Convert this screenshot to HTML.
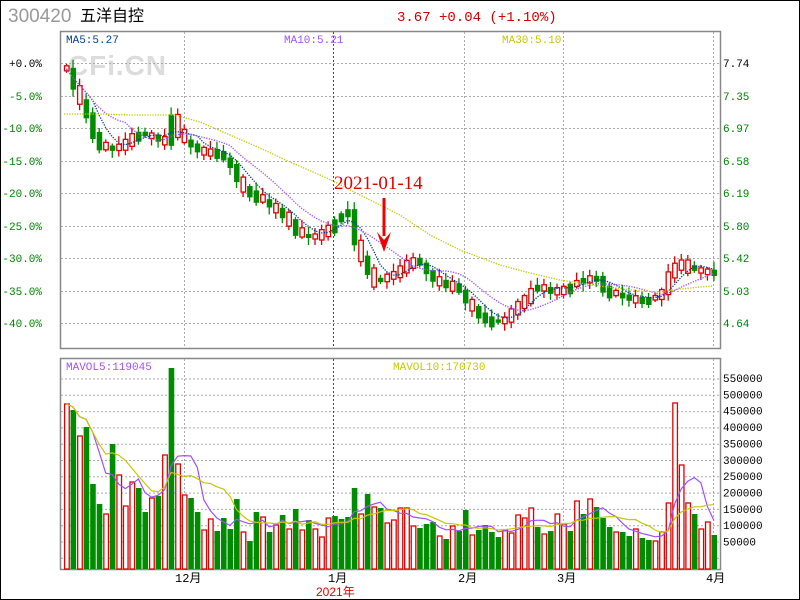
<!DOCTYPE html>
<html><head><meta charset="utf-8"><style>
body{margin:0;background:#fff}
#w{position:relative;width:798px;height:598px;border:1px solid #000;overflow:hidden}
svg{position:absolute;left:-1px;top:-1px}
text{font-family:"Liberation Mono","WenQuanYi Zen Hei",monospace}
</style></head><body><div id="w">
<svg id="s" width="800" height="600" xmlns="http://www.w3.org/2000/svg">
<text x="8" y="22" style="font-family:'Liberation Sans',sans-serif" font-size="19" fill="#999">300420</text>
<text x="80" y="21" style="font-family:'WenQuanYi Zen Hei',sans-serif" font-size="16" fill="#000">五洋自控</text>
<text x="397" y="21" font-size="14" fill="#d00000">3.67 +0.04 (+1.10%)</text>
<rect x="60.5" y="31.5" width="660" height="317" fill="none" stroke="#888" stroke-width="1.5"/>
<rect x="60.5" y="358.5" width="660" height="211" fill="none" stroke="#888" stroke-width="1.5"/>
<text x="68" y="75" style="font-family:'Liberation Sans',sans-serif;font-weight:bold" font-size="28" textLength="98" fill="#dcdcdc">CFi.CN</text>
<g id="grid"></g><g id="vol"></g><g id="cand"></g><g id="lines"></g>
<text x="66" y="43" font-size="11" fill="#004090">MA5:5.27</text>
<text x="284" y="43" font-size="11" fill="#a050ff">MA10:5.21</text>
<text x="502" y="43" font-size="11" fill="#c8c800">MA30:5.10</text>
<text x="66" y="370" font-size="11" fill="#a050ff">MAVOL5:119045</text>
<text x="393" y="370" font-size="11" fill="#c8c800">MAVOL10:170730</text>
<text x="334" y="189" style="font-family:'Liberation Serif',serif" font-size="19" fill="#e00000">2021-01-14</text>
<rect x="382.5" y="198" width="3" height="38" fill="#f00000"/>
<polygon points="377,232 384,252 391,232 384,240" fill="#f00000"/>
<g font-size="12" fill="#000" style="font-family:'WenQuanYi Zen Hei',sans-serif">
<text x="175" y="582">12月</text><text x="328" y="582">1月</text><text x="458" y="582">2月</text><text x="557" y="582">3月</text><text x="706" y="582">4月</text>
</g>
<text x="316" y="596" font-size="12" fill="#e00000" style="font-family:'WenQuanYi Zen Hei',sans-serif">2021年</text>
</svg></div>
<script>
var NS="http://www.w3.org/2000/svg";
function el(p,t,a,tx){var e=document.createElementNS(NS,t);for(var k in a)e.setAttribute(k,a[k]);if(tx!=null)e.textContent=tx;document.getElementById(p).appendChild(e);return e}
var g="grid";
var py=[63,96,128,161,193,226,258,291,323],pl=["+0.0%","-5.0%","-10.0%","-15.0%","-20.0%","-25.0%","-30.0%","-35.0%","-40.0%"],pr=["7.74","7.35","6.97","6.58","6.19","5.80","5.42","5.03","4.64"];
py.forEach(function(y,i){el(g,"line",{x1:61,x2:720,y1:y+.5,y2:y+.5,stroke:"#aaa","stroke-dasharray":"2,2"});
el(g,"text",{x:42,y:y+4,"font-size":11,"text-anchor":"end",fill:i?"#008000":"#000"},pl[i]);
el(g,"text",{x:723,y:y+4,"font-size":11,fill:i?"#008000":"#000"},pr[i]);});
for(var k=0;k<12;k++){var yy=379+k*16.3;el(g,"line",{x1:61,x2:720,y1:yy,y2:yy,stroke:"#aaa","stroke-dasharray":"2,2"});
if(k<11)el(g,"text",{x:723,y:378+k*16.35+4,"font-size":11,fill:"#000"},(550000-k*50000)+"");}
[184,333,464,563,713].forEach(function(x){var c=x==333?"#f00000":"#aaa";
el(g,"line",{x1:x+.5,x2:x+.5,y1:32,y2:348,stroke:c,"stroke-dasharray":"2,2"});
el(g,"line",{x1:x+.5,x2:x+.5,y1:359,y2:569,stroke:c,"stroke-dasharray":"2,2"});});
var V="r404 g410 r436 g427 g484 g504 r514 g444 r475 r506 r482 g488 g512 r498 g496 r455 g368 r464 r495 g498 g512 r530 r519 g531 g518 g529 g499 r532 g541 g512 r517 g532 r525 g515 r529 g509 r530 g520 r529 r537 r518 g516 g519 g517 g488 r514 g494 r507 g508 r523 r520 r508 r508 r526 g528 g524 g522 r536 g539 r526 g531 g510 r535 g530 g525 g532 g537 r530 r533 r515 r518 r508 g527 r534 g531 r514 r524 g531 r501 g514 r499 g507 g518 g527 r532 g532 g536 r529 g538 g540 r541 r532 r503 r403 r465 r503 g514 r529 r522 g535".split(" ");
var N=V.length,X=function(i){return 64+i*6.54};
var P=[[64,62],[75,92],[85,110],[95,140],[105,148],[120,145],[135,132],[150,135],[165,140],[172,112],[180,138],[200,150],[215,150],[230,165],[240,185],[255,195],[270,205],[285,215],[300,235],[315,235],[330,225],[340,215],[348,210],[355,245],[365,265],[375,282],[385,276],[395,272],[405,262],[415,258],[425,270],[435,280],[445,282],[455,285],[465,300],[480,315],[495,322],[505,318],[515,305],[525,296],[535,285],[550,290],[565,287],[580,280],[595,275],[605,290],[620,295],[635,298],[650,298],[660,295],[670,268],[680,260],[690,268],[700,270],[712,271]];
function path(x){for(var j=1;j<P.length;j++)if(x<=P[j][0]){var a=P[j-1],b=P[j];return a[1]+(b[1]-a[1])*(x-a[0])/(b[0]-a[0])}return P[P.length-1][1]}
var C=[],vt=[];
for(var i=0;i<N;i++){var col=V[i][0],tp=+V[i].slice(1),x=X(i),c=path(x+2.5),o=i?C[i-1]:c-2;
var d=Math.max(3,Math.abs(c-o)+3+((i*7)%6));var t,b;
t=Math.min(o,c)-1;b=t+d;
var h=t-2-((i*13)%7),l=b+2+((i*11)%6);
var cl=col=="r"?"#e00000":"#008c00";
el("cand","line",{x1:x+2.5,x2:x+2.5,y1:h,y2:l,stroke:cl,"stroke-width":1.3});
if(col=="r")el("cand","rect",{x:x+.5,y:t,width:4.5,height:b-t,fill:"#fff",stroke:cl,"stroke-width":1.3});
else el("cand","rect",{x:x,y:t,width:5.5,height:b-t,fill:cl});
C.push(c);
if(col=="r")el("vol","rect",{x:x+.6,y:tp,width:4.6,height:569-tp,fill:"#fff",stroke:"#e00000","stroke-width":1.3});
else el("vol","rect",{x:x,y:tp,width:5.6,height:569-tp,fill:"#008c00"});
vt.push(569-tp);}
function ma(arr,n,f){var pts=[];for(var i=0;i<arr.length;i++){var s=0,m=0;for(var j=Math.max(0,i-n+1);j<=i;j++){s+=arr[j];m++}pts.push((X(i)+2.5).toFixed(1)+","+f(s/m).toFixed(1))}return pts.join(" ")}
var id=function(v){return v};
el("lines","polyline",{points:ma(C,5,id),fill:"none",stroke:"#004090","stroke-width":1.3,"stroke-dasharray":"1.3,1.3"});
el("lines","polyline",{points:ma(C,10,id),fill:"none",stroke:"#a050ff","stroke-width":1.3,"stroke-dasharray":"1.3,1.3"});
el("lines","polyline",{points:"64,114 100,114 130,115 175,115 200,122 230,135 260,148 290,162 320,175 335,182 360,195 400,215 430,235 460,250 500,265 530,273 560,280 600,286 640,291 660,292 680,289 700,287 713,286",fill:"none",stroke:"#c8c800","stroke-width":1.3,"stroke-dasharray":"1.3,1.3"});
var vf=function(v){return 569-v};
el("lines","polyline",{points:ma(vt,5,vf),fill:"none",stroke:"#a050ff","stroke-width":1.2});
el("lines","polyline",{points:ma(vt,10,vf),fill:"none",stroke:"#c8c800","stroke-width":1.2});
</script></body></html>
